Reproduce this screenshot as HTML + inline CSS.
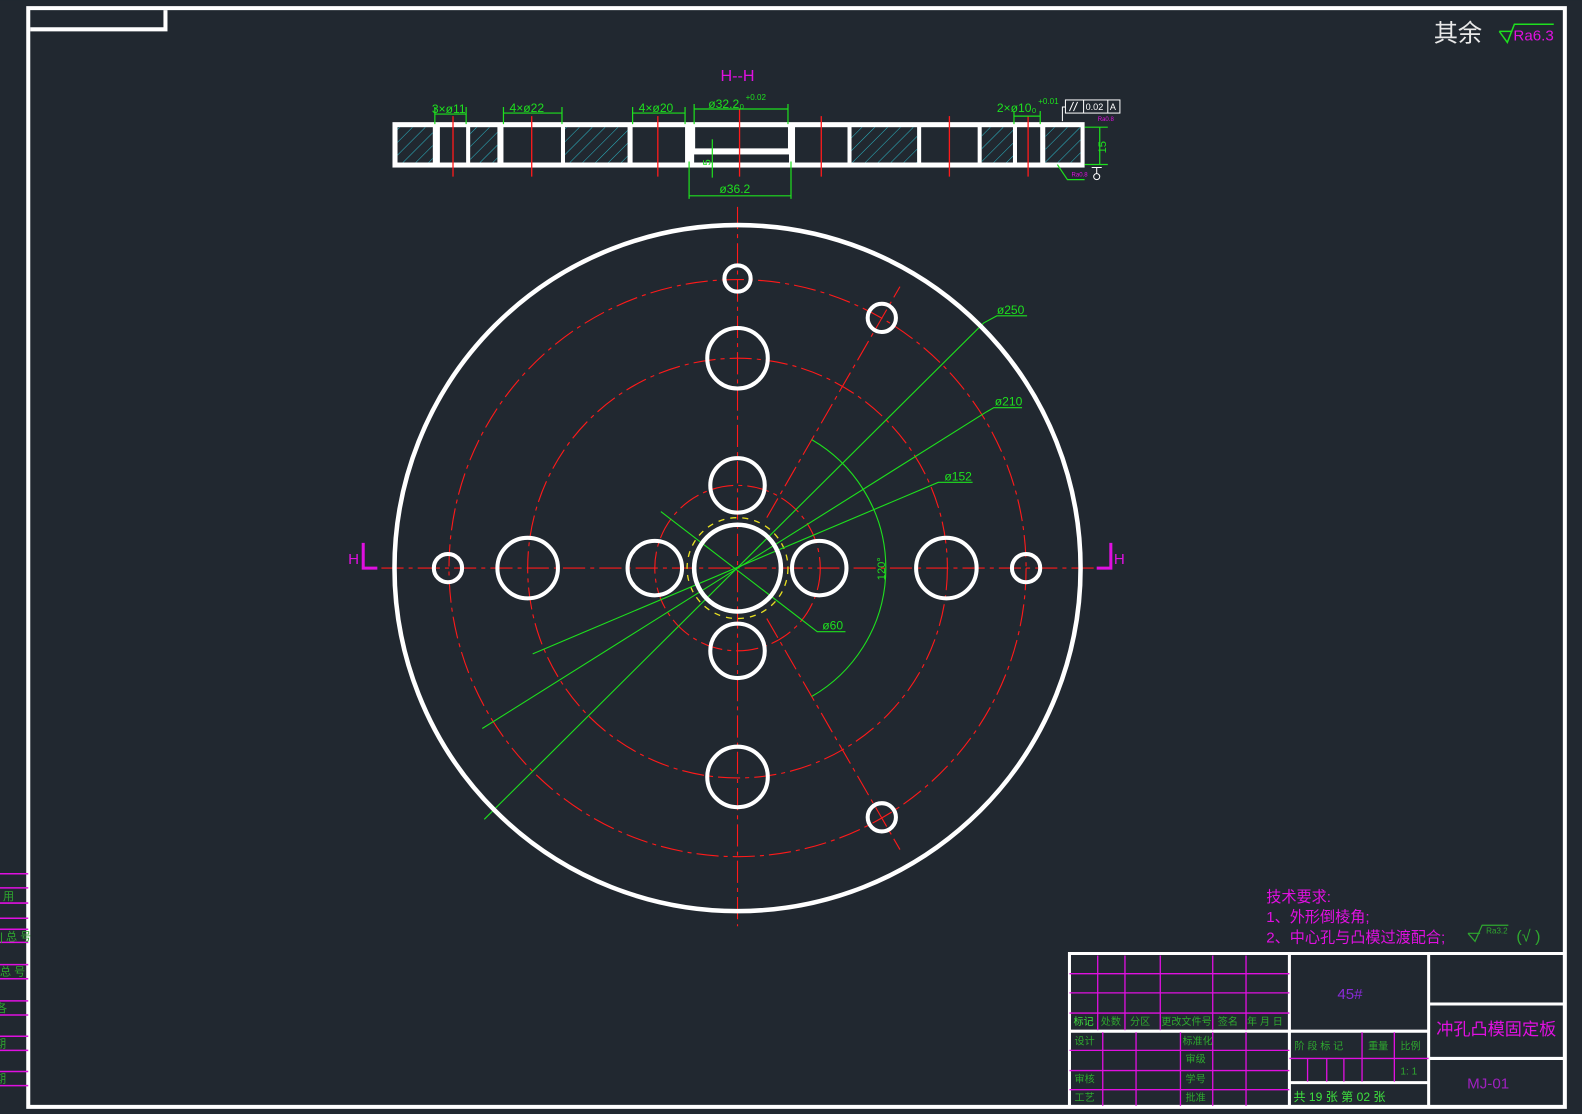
<!DOCTYPE html>
<html><head><meta charset="utf-8"><style>
html,body{margin:0;padding:0;background:#212830;}
svg{display:block}
text{font-family:"Liberation Sans","Noto Sans CJK SC",sans-serif}
</style></head><body>
<svg width="1582" height="1114" viewBox="0 0 1568 1104" xmlns="http://www.w3.org/2000/svg">
<defs>
<pattern id="h" width="9" height="9" patternUnits="userSpaceOnUse" patternTransform="rotate(45)">
<line x1="0" y1="0" x2="0" y2="9" stroke="#2bb8c8" stroke-width="1"/>
</pattern>
</defs>
<rect width="1568" height="1104" fill="#212830"/>
<!-- frame -->
<g stroke="#fff" stroke-width="4" fill="none">
<path d="M28 8 H1551 V1097 H28 Z"/>
<path d="M30 29 H164 V10"/>
</g>
<!-- left edge bits -->
<g stroke="#e010e0" stroke-width="1.5">
<line x1="0" y1="866" x2="28" y2="866"/><line x1="0" y1="880" x2="28" y2="880"/>
<line x1="0" y1="895" x2="28" y2="895"/><line x1="0" y1="910" x2="28" y2="910"/>
<line x1="0" y1="921" x2="28" y2="921"/><line x1="0" y1="934" x2="28" y2="934"/>
<line x1="0" y1="956" x2="28" y2="956"/><line x1="0" y1="970" x2="28" y2="970"/>
<line x1="0" y1="992" x2="28" y2="992"/><line x1="0" y1="1006" x2="28" y2="1006"/>
<line x1="0" y1="1027" x2="28" y2="1027"/><line x1="0" y1="1041" x2="28" y2="1041"/>
<line x1="0" y1="1062" x2="28" y2="1062"/><line x1="0" y1="1076" x2="28" y2="1076"/>
</g>
<g fill="#2fa82f" font-size="11">
<text x="3" y="892">用</text><text x="0" y="932">| 总 号</text><text x="0" y="967">总 号</text>
<text x="-4" y="1003">各</text><text x="-5" y="1038">期</text><text x="-5" y="1073">期</text>
</g>
<!-- top right -->
<text x="1421" y="41" fill="#e8e8e8" font-size="24" font-family="Liberation Serif,'Noto Serif CJK SC',serif">其余</text>
<path d="M1486 31 L1494 42 L1501 24 H1540" stroke="#1ee01e" stroke-width="1.5" fill="none"/>
<line x1="1486" y1="31" x2="1499" y2="31" stroke="#1ee01e" stroke-width="1.5"/>
<text x="1500" y="40" fill="#e010e0" font-size="15">Ra6.3</text>

<!-- section view -->
<text x="731" y="80" fill="#e010e0" font-size="16" text-anchor="middle" font-family="Liberation Mono,monospace">H--H</text>
<rect x="389" y="121" width="686" height="45" fill="#fff"/>
<g fill="url(#h)">
<rect x="394" y="126" width="35" height="35" fill="#212830"/><rect x="394" y="126" width="35" height="35"/>
<rect x="466" y="126" width="27" height="35" fill="#212830"/><rect x="466" y="126" width="27" height="35"/>
<rect x="560" y="126" width="62" height="35" fill="#212830"/><rect x="560" y="126" width="62" height="35"/>
<rect x="844" y="126" width="65" height="35" fill="#212830"/><rect x="844" y="126" width="65" height="35"/>
<rect x="973" y="126" width="31" height="35" fill="#212830"/><rect x="973" y="126" width="31" height="35"/>
<rect x="1036" y="126" width="35" height="35" fill="#212830"/><rect x="1036" y="126" width="35" height="35"/>
</g>
<g fill="#212830">
<rect x="436" y="126" width="26" height="35"/>
<rect x="499" y="126" width="57" height="35"/>
<rect x="627" y="126" width="52" height="35"/>
<rect x="689" y="126" width="92" height="21"/>
<rect x="688" y="153" width="94" height="8"/>
<rect x="788" y="126" width="52" height="35"/>
<rect x="913" y="126" width="56" height="35"/>
<rect x="1008" y="126" width="23" height="35"/>
</g>
<g stroke="#ff1a1a" stroke-width="1.3">
<line x1="449" y1="115" x2="449" y2="175"/><line x1="527" y1="115" x2="527" y2="175"/>
<line x1="652" y1="115" x2="652" y2="175"/><line x1="733" y1="108" x2="733" y2="175"/>
<line x1="814" y1="115" x2="814" y2="175"/><line x1="941" y1="115" x2="941" y2="175"/>
<line x1="1019" y1="115" x2="1019" y2="175"/>
</g>
<g stroke="#1ee01e" stroke-width="1.2" fill="none">
<path d="M431 123 V106 M462 123 V106 M431 113 H462"/>
<path d="M499 123 V106 M557 123 V106 M499 112 H557"/>
<path d="M627 123 V106 M679 123 V106 M627 112 H679"/>
<path d="M688 123 V103 M781 123 V103 M688 108 H781"/>
<path d="M1005 123 V110 M1031 123 V110 M1005 115 H1031"/>
<path d="M683 160 V197 M784 160 V197 M683 194 H784"/>
<path d="M706 138 V176"/>
<path d="M1075 126 H1098 M1075 163 H1098 M1090 126 V163"/>
<path d="M1048 163 L1058 178 H1075"/>
</g>
<g fill="#1ee01e" font-size="12">
<text x="428" y="112">3×ø11</text>
<text x="505" y="111">4×ø22</text>
<text x="633" y="111">4×ø20</text>
<text x="702" y="107">ø32.2₀</text><text x="739" y="99" font-size="8">+0.02</text>
<text x="988" y="111">2×ø10₀</text><text x="1029" y="103" font-size="8">+0.01</text>
<text x="713" y="191">ø36.2</text>
<text x="704" y="164" transform="rotate(-90 704 164)" font-size="11">5</text>
<text x="1096" y="152" transform="rotate(-90 1096 152)" font-size="11">15</text>
</g>
<g stroke="#fff" stroke-width="1" fill="none">
<rect x="1056" y="99" width="54" height="13"/>
<line x1="1074" y1="99" x2="1074" y2="112"/><line x1="1098" y1="99" x2="1098" y2="112"/>
<path d="M1060 110 L1064 101 M1064 110 L1068 101"/>
<path d="M1056 106 H1053 V120"/>
<path d="M1082 166 H1092 M1087 166 V172"/><circle cx="1087" cy="175" r="3"/>
</g>
<text x="1076" y="109" fill="#fff" font-size="9">0.02</text><text x="1100" y="109" fill="#fff" font-size="9">A</text>
<text x="1088" y="120" fill="#e010e0" font-size="6">Ra0.8</text>
<text x="1062" y="175" fill="#e010e0" font-size="6">Ra0.8</text>

<!-- main view centerlines -->
<g stroke="#ff1a1a" stroke-width="1.1" fill="none" stroke-dasharray="22 5 4 5">
<line x1="378" y1="563" x2="1088" y2="563"/>
<line x1="731" y1="205" x2="731" y2="918"/>
<circle cx="731" cy="563" r="286"/>
<circle cx="731" cy="563" r="208"/>
<circle cx="731" cy="563" r="82"/>
<line x1="760" y1="513" x2="892" y2="284"/>
<line x1="760" y1="613" x2="892" y2="842"/>
</g>
<circle cx="731" cy="563" r="50" stroke="#e8e020" stroke-width="1.3" fill="none" stroke-dasharray="6 6"/>
<!-- green dims -->
<g stroke="#1ee01e" stroke-width="1.1" fill="none">
<path d="M480 812 L975 320 L988 313 H1018"/>
<path d="M478 722 L978 408 L985 404 H1013"/>
<path d="M528 648 L930 478 L935 478 H964"/>
<path d="M655 507 L810 626 H838"/>
<path d="M804.5 435.7 A147 147 0 0 1 804.5 690.3"/>
</g>
<g fill="#1ee01e" font-size="12">
<text x="988" y="311">ø250</text>
<text x="986" y="402">ø210</text>
<text x="936" y="476">ø152</text>
<text x="815" y="624">ø60</text>
<text x="877" y="575" transform="rotate(-90 877 575)" font-size="11">120°</text>
</g>
<!-- holes -->
<g stroke="#fff" fill="none">
<circle cx="731" cy="563" r="340" stroke-width="4.5"/>
<circle cx="731" cy="563" r="43" stroke-width="4.5"/>
<g stroke-width="4">
<circle cx="444" cy="563" r="14"/><circle cx="1017" cy="563" r="14"/>
<circle cx="731" cy="276" r="13"/><circle cx="874" cy="315" r="14"/><circle cx="874" cy="810" r="14"/>
<circle cx="523" cy="563" r="30"/><circle cx="938" cy="563" r="30"/>
<circle cx="731" cy="355" r="30"/><circle cx="731" cy="770" r="30"/>
<circle cx="649" cy="563" r="27"/><circle cx="812" cy="563" r="27"/>
<circle cx="731" cy="481" r="27"/><circle cx="731" cy="645" r="27"/>
</g>
</g>
<!-- section markers -->
<g stroke="#e010e0" stroke-width="3" fill="none">
<path d="M360 538 V563 H374"/><path d="M1101 538 V563 H1087"/>
</g>
<text x="345" y="559" fill="#e010e0" font-size="15" font-family="Liberation Serif,serif">H</text>
<text x="1104" y="559" fill="#e010e0" font-size="15" font-family="Liberation Serif,serif">H</text>

<!-- tech requirements -->
<g fill="#e010e0" font-size="15">
<text x="1255" y="894">技术要求:</text>
<text x="1255" y="914">1、外形倒棱角;</text>
<text x="1255" y="934">2、中心孔与凸模过渡配合;</text>
</g>
<path d="M1455 925 L1462 933 L1469 917 H1495 M1455 925 H1467" stroke="#2fa82f" stroke-width="1.2" fill="none"/>
<text x="1473" y="925" fill="#2fa82f" font-size="8">Ra3.2</text>
<text x="1503" y="933" fill="#2fa82f" font-size="16">(√ )</text>

<!-- title block -->
<g stroke="#fff" stroke-width="3" fill="none">
<path d="M1060 1097 V945 H1551"/>
<line x1="1278" y1="945" x2="1278" y2="1097"/>
<line x1="1416" y1="945" x2="1416" y2="1097"/>
<line x1="1060" y1="1022" x2="1278" y2="1022"/>
<line x1="1278" y1="1022" x2="1416" y2="1022"/>
<line x1="1278" y1="1073" x2="1416" y2="1073"/>
<line x1="1416" y1="995" x2="1551" y2="995"/>
<line x1="1416" y1="1049" x2="1551" y2="1049"/>
</g>
<g stroke="#e010e0" stroke-width="1.3">
<line x1="1060" y1="965" x2="1278" y2="965"/><line x1="1060" y1="984" x2="1278" y2="984"/><line x1="1060" y1="1004" x2="1278" y2="1004"/>
<line x1="1088" y1="947" x2="1088" y2="1021"/><line x1="1115" y1="947" x2="1115" y2="1021"/><line x1="1150" y1="947" x2="1150" y2="1021"/><line x1="1202" y1="947" x2="1202" y2="1021"/><line x1="1235" y1="947" x2="1235" y2="1021"/>
<line x1="1060" y1="1041" x2="1278" y2="1041"/><line x1="1060" y1="1061" x2="1278" y2="1061"/><line x1="1060" y1="1080" x2="1278" y2="1080"/>
<line x1="1093" y1="1023" x2="1093" y2="1096"/><line x1="1126" y1="1023" x2="1126" y2="1096"/><line x1="1170" y1="1023" x2="1170" y2="1096"/><line x1="1202" y1="1023" x2="1202" y2="1096"/><line x1="1235" y1="1023" x2="1235" y2="1096"/>
<line x1="1278" y1="1049" x2="1416" y2="1049"/>
<line x1="1296" y1="1049" x2="1296" y2="1072"/><line x1="1315" y1="1049" x2="1315" y2="1072"/><line x1="1332" y1="1049" x2="1332" y2="1072"/>
<line x1="1350" y1="1023" x2="1350" y2="1072"/><line x1="1382" y1="1023" x2="1382" y2="1072"/>
</g>
<g fill="#2fa82f" font-size="10">
<text x="1064" y="1016" fill="#3ee03e">标记</text><text x="1091" y="1016">处数</text><text x="1120" y="1016">分区</text>
<text x="1151" y="1016">更改文件号</text><text x="1207" y="1016">签名</text><text x="1236" y="1016">年 月 日</text>
<text x="1065" y="1035">设计</text><text x="1172" y="1035">标准化</text>
<text x="1175" y="1053">审级</text>
<text x="1065" y="1073">审核</text><text x="1175" y="1073">学号</text>
<text x="1065" y="1091">工艺</text><text x="1175" y="1091">批准</text>
<text x="1283" y="1040">阶 段 标 记</text><text x="1356" y="1040">重量</text><text x="1388" y="1040">比例</text>
<text x="1388" y="1065">1: 1</text>
</g>
<text x="1282" y="1091" fill="#3ee03e" font-size="12">共 19 张  第 02 张</text>
<text x="1338" y="990" fill="#8a2ad8" font-size="15" text-anchor="middle" font-family="Liberation Serif,serif">45#</text>
<text x="1483" y="1026" fill="#e010e0" font-size="17" text-anchor="middle">冲孔凸模固定板</text>
<text x="1475" y="1079" fill="#a020c0" font-size="15" text-anchor="middle" font-family="Liberation Serif,serif">MJ-01</text>
</svg>
</body></html>
